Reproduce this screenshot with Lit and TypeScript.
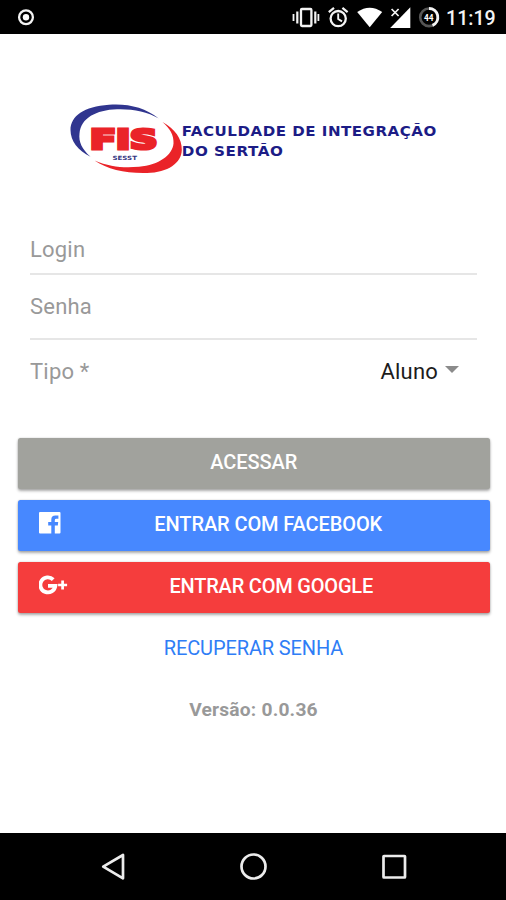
import { LitElement, html, css, svg } from "lit";
import { customElement, property } from "lit/decorators.js";

@customElement("status-bar")
class StatusBar extends LitElement {
  static styles = css`
    :host { display: flex; align-items: flex-start; height: 34px; background: #000; color: #f4f4f4; box-sizing: border-box; }
    svg { display: block; flex: none; }
    .rec { margin-left: 16px; }
    .system { margin-left: auto; }
    .clock { width: 50px; margin: 7px 10px 0 4px; font: 500 19.6px/24px Roboto, sans-serif; letter-spacing: 0; white-space: nowrap; }
    .pct { font: 700 9.5px Roboto, sans-serif; }
  `;
  render() {
    return html`
      <svg class="rec" width="20" height="34" viewBox="16 0 20 34">
        <circle cx="26" cy="17.2" r="6.9" fill="none" stroke="#f4f4f4" stroke-width="2.3" />
        <circle cx="26" cy="17.2" r="3.2" fill="#fff" />
      </svg>
      <svg class="system" width="152" height="34" viewBox="290 0 152 34" fill="none" stroke="#f4f4f4">
        <rect x="301" y="9" width="10.4" height="17" rx="1" stroke-width="2.3" />
        <path d="M297.3 11.5V23.5M315.3 11.5V23.5" stroke-width="2.2" />
        <path d="M293.5 14V21M318.4 14V21" stroke-width="1.8" />
        <circle cx="338.2" cy="18.6" r="7.6" stroke-width="2.3" />
        <path d="M338.2 13.5V19L342 21.4" stroke-width="1.9" />
        <path d="M328.8 12.2L334 7.9M347.6 12.2L342.4 7.9" stroke-width="2.2" />
        <path d="M357.2 12Q369.7 3.4 382.2 12L369.7 27.2Z" fill="#fff" stroke="none" />
        <path d="M410.3 7.3V27.9H390.2Z" fill="#fff" stroke="none" />
        <path d="M391.6 9L398.6 16M398.6 9L391.6 16" stroke-width="1.7" />
        <circle cx="429" cy="17.3" r="8.8" stroke="#555" stroke-width="2.6" />
        <path d="M429 8.5A8.8 8.8 0 0 1 432.5 25.4" stroke-width="2.8" />
        <text class="pct" x="428.8" y="20.7" text-anchor="middle" fill="#fff" stroke="none" textLength="9.5" lengthAdjust="spacingAndGlyphs">44</text>
      </svg>
      <div class="clock">11:19</div>`;
  }
}

@customElement("school-logo")
class SchoolLogo extends LitElement {
  static styles = css`
    :host { display: block; }
    svg { display: block; }
    .name { font: 700 14.8px "DejaVu Sans", sans-serif; letter-spacing: 0.5px; fill: #1c1c86; }
    .fis { font: 700 26.5px "DejaVu Sans", sans-serif; fill: #ea2328; stroke: #ea2328; stroke-width: 3.2px; }
    .sub { font: 700 5.7px "DejaVu Sans", sans-serif; fill: #35357f; }
  `;
  render() {
    return html`<svg width="390" height="90" viewBox="60 95 390 90">
      <path d="M158.5 118.2C145 107.5 128 103.3 109 104.7C84 106.5 70.5 116 70.5 130C70.5 141 78 150.5 90.5 156.8C82 149 78.5 142 79.5 133.5C81 118 96 110 117 109.3C133 108.8 147 112 158.5 118.2Z" fill="#30358f" />
      <path d="M162.5 122C175 129 182 138.5 181.8 150C181.5 163 168 172.5 147 173C125 173.5 108 169.5 94.5 160.5C110 167 123 168 139 166.8C159 165 172.5 155 173.5 143.5C174 135 170 128.5 162.5 122Z" fill="#ea2328" />
      <text class="fis" x="90" y="148.6" textLength="67.5" lengthAdjust="spacingAndGlyphs">FIS</text>
      <text class="sub" x="112.5" y="160.4" textLength="24.5" lengthAdjust="spacingAndGlyphs">SESST</text>
      <text class="name" x="181.8" y="136" textLength="255" lengthAdjust="spacingAndGlyphs">FACULDADE DE INTEGRAÇÃO</text>
      <text class="name" x="181.8" y="156" textLength="101.5" lengthAdjust="spacingAndGlyphs">DO SERTÃO</text>
    </svg>`;
  }
}

@customElement("action-button")
class ActionButton extends LitElement {
  @property({ reflect: true }) tone = "grey";
  static styles = css`
    :host { display: flex; align-items: center; height: 51px; box-sizing: border-box; border-radius: 2.5px; color: #fff; background: #a1a29d;
      box-shadow: 0 2px 3px rgba(0, 0, 0, 0.32), 0 0 2px rgba(0, 0, 0, 0.18); font: 500 20px/24px Roboto, sans-serif; letter-spacing: -0.1px; padding: 0 21px; }
    :host([tone="blue"]) { background: #4788ff; }
    :host([tone="red"]) { background: #f53d3d; letter-spacing: -0.2px; padding-right: 15px; }
    .icon { flex: none; display: flex; padding-bottom: 5px; }
    .label { flex: 1; text-align: center; white-space: nowrap; padding-bottom: 3px; }
  `;
  render() {
    return html`<span class="icon"><slot name="icon"></slot></span><span class="label"><slot></slot></span>`;
  }
}

@customElement("nav-bar")
class NavBar extends LitElement {
  static styles = css`
    :host { display: flex; justify-content: space-between; height: 67px; padding: 0 97px 0 99px; background: #000; }
    svg { display: block; }
  `;
  render() {
    const shapes = [
      svg`<path d="M4.2 33.6L24 22V45.3Z" stroke-linejoin="round" />`,
      svg`<circle cx="14.5" cy="33.5" r="12" />`,
      svg`<rect x="4.5" y="23" width="21.5" height="21.5" rx="0.5" />`,
    ];
    return shapes.map((s) => html`<svg width="30" height="67" viewBox="0 0 30 67" fill="none" stroke="#ececec" stroke-width="2.7">${s}</svg>`);
  }
}

@customElement("app-root")
class AppRoot extends LitElement {
  static styles = css`
    :host { display: flex; flex-direction: column; width: 506px; height: 900px; overflow: hidden; background: #fff; font-family: Roboto, sans-serif; color: #999; }
    main { flex: 1; display: flex; flex-direction: column; }
    school-logo { margin: 61px 0 0 60px; }
    .form { margin: 39px 29px 0 30px; font-size: 22px; line-height: 28px; letter-spacing: 0.2px; }
    .field { display: flex; align-items: flex-start; box-sizing: border-box; border-bottom: 2px solid #e6e6e6; }
    .login { height: 51px; padding-top: 12px; }
    .senha { height: 65px; padding-top: 18px; }
    .tipo { height: 59px; padding-top: 18px; border: 0; }
    .value { margin-left: auto; color: #1c1c1c; }
    .caret { margin: 8px 18px 0 7px; border: 7px solid transparent; border-top-color: #8b8b8b; border-bottom: 0; }
    .actions { display: flex; flex-direction: column; gap: 11px; margin: 39px 16px 0 17.5px; }
    .recover { margin-top: 23px; text-align: center; font-size: 20px; line-height: 24px; letter-spacing: -0.12px; padding-left: 1px; color: #2f7df6; }
    .version { margin-top: 38px; text-align: center; font-size: 19.2px; line-height: 24px; font-weight: 700; letter-spacing: 0.2px; padding-left: 1px; }
  `;
  render() {
    return html`
      <status-bar></status-bar>
      <main>
        <school-logo></school-logo>
        <section class="form">
          <div class="field login">Login</div>
          <div class="field senha">Senha</div>
          <div class="field tipo"><span>Tipo *</span><span class="value">Aluno</span><i class="caret"></i></div>
        </section>
        <section class="actions">
          <action-button tone="grey">ACESSAR</action-button>
          <action-button tone="blue">
            <svg slot="icon" width="29" height="26" viewBox="0 0 29 26">
              <path fill="#fff" d="M1 2H20.5Q21.5 2 21.5 3V22.5Q21.5 23.5 20.5 23.5H15.8V15.4H18.8L19.2 12H15.8V10.2Q15.8 8.8 17.2 8.8H19.4V5.5H16.4Q12.3 5.5 12.3 9.7V12H9.2V15.4H12.3V23.5H1Q0 23.5 0 22.5V3Q0 2 1 2Z" />
            </svg>ENTRAR COM FACEBOOK
          </action-button>
          <action-button tone="red">
            <svg slot="icon" width="29" height="26" viewBox="0 0 29 26" fill="none" stroke="#fff">
              <path d="M14.2 7.6A7.5 7.5 0 1 0 16.3 13.9H9" stroke-width="3.9" />
              <path d="M23.6 8.5V17.5M19.1 13H28.1" stroke-width="2.7" />
            </svg>ENTRAR COM GOOGLE
          </action-button>
        </section>
        <div class="recover">RECUPERAR SENHA</div>
        <div class="version">Versão: 0.0.36</div>
      </main>
      <nav-bar></nav-bar>`;
  }
}
